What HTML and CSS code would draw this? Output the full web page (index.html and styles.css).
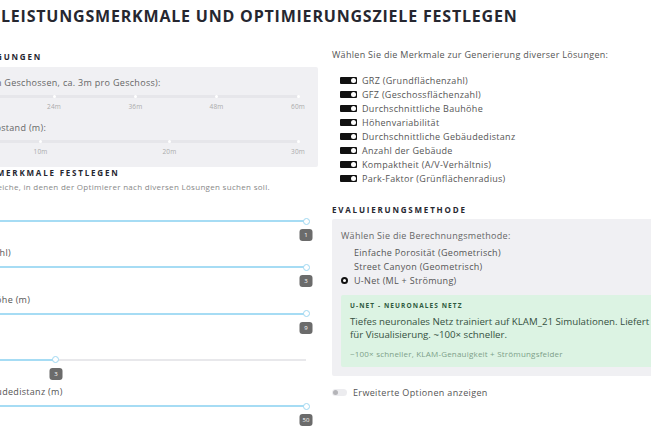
FILE: index.html
```html
<!DOCTYPE html>
<html lang="de">
<head>
	<meta charset="UTF-8">
	<title>Leistungsmerkmale festlegen</title>
	<link rel="stylesheet" href="styles.css">
</head>
<body>
	<h1 class="title">Leistungsmerkmale und Optimierungsziele festlegen</h1>

	<div class="cols">
		<div class="col">
			<h3 class="sec sec-first">Bebauungs-Bedingungen</h3>
			<div class="box">
				<div class="lbl">Maximale Bauhöhe (in Geschossen, ca. 3m pro Geschoss):</div>
				<div class="rs">
					<div class="rs-track"></div>
					<span class="dot" style="left:15.8%"></span>
					<span class="dot" style="left:36.8%"></span>
					<span class="dot" style="left:57.9%"></span>
					<span class="dot" style="left:78.9%"></span>
					<span class="dot" style="left:100%"></span>
					<span class="tick" style="left:15.8%">12m</span>
					<span class="tick" style="left:36.8%">24m</span>
					<span class="tick" style="left:57.9%">36m</span>
					<span class="tick" style="left:78.9%">48m</span>
					<span class="tick" style="left:100%">60m</span>
				</div>
				<div class="lbl">Minimaler Gebäudeabstand (m):</div>
				<div class="rs">
					<div class="rs-track"></div>
					<span class="dot" style="left:0%"></span>
					<span class="dot" style="left:33.3%"></span>
					<span class="dot" style="left:66.7%"></span>
					<span class="dot" style="left:100%"></span>
					<span class="tick" style="left:0%">0m</span>
					<span class="tick" style="left:33.3%">10m</span>
					<span class="tick" style="left:66.7%">20m</span>
					<span class="tick" style="left:100%">30m</span>
				</div>
			</div>

			<h3 class="sec">Zielbereiche der Merkmale festlegen</h3>
			<p class="sub">Definieren Sie hier die Bereiche, in denen der Optimierer nach diversen Lösungen suchen soll.</p>

			<div class="feats">
				<div class="feat">
					<div class="feat-lbl">GRZ (Grundflächenzahl)</div>
					<div class="sl">
						<div class="sl-track"></div>
						<div class="sl-fill" style="width:100%"></div>
						<span class="knob" style="left:100%"></span>
						<span class="badge" style="left:100%">1</span>
					</div>
				</div>
				<div class="feat">
					<div class="feat-lbl">GFZ (Geschossflächenzahl)</div>
					<div class="sl">
						<div class="sl-track"></div>
						<div class="sl-fill" style="width:100%"></div>
						<span class="knob" style="left:100%"></span>
						<span class="badge" style="left:100%">3</span>
					</div>
				</div>
				<div class="feat">
					<div class="feat-lbl">Durchschnittliche Bauhöhe (m)</div>
					<div class="sl">
						<div class="sl-track"></div>
						<div class="sl-fill" style="width:100%"></div>
						<span class="knob" style="left:100%"></span>
						<span class="badge" style="left:100%">9</span>
					</div>
				</div>
				<div class="feat">
					<div class="feat-lbl">Höhenvariabilität</div>
					<div class="sl">
						<div class="sl-track"></div>
						<div class="sl-fill" style="width:39.6%"></div>
						<span class="knob" style="left:39.6%"></span>
						<span class="badge" style="left:39.6%">3</span>
					</div>
				</div>
				<div class="feat">
					<div class="feat-lbl">Durchschnittliche Gebäudedistanz (m)</div>
					<div class="sl">
						<div class="sl-track"></div>
						<div class="sl-fill" style="width:100%"></div>
						<span class="knob" style="left:100%"></span>
						<span class="badge" style="left:100%">50</span>
					</div>
				</div>
			</div>
		</div>

		<div class="col">
			<p class="intro">Wählen Sie die Merkmale zur Generierung diverser Lösungen:</p>
			<ul class="toggles">
				<li><span class="sw"></span>GRZ (Grundflächenzahl)</li>
				<li><span class="sw"></span>GFZ (Geschossflächenzahl)</li>
				<li><span class="sw"></span>Durchschnittliche Bauhöhe</li>
				<li><span class="sw"></span>Höhenvariabilität</li>
				<li><span class="sw"></span>Durchschnittliche Gebäudedistanz</li>
				<li><span class="sw"></span>Anzahl der Gebäude</li>
				<li><span class="sw"></span>Kompaktheit (A/V-Verhältnis)</li>
				<li><span class="sw"></span>Park-Faktor (Grünflächenradius)</li>
			</ul>

			<h3 class="sec sec-eval">Evaluierungsmethode</h3>
			<div class="box box-eval">
				<div class="lbl">Wählen Sie die Berechnungsmethode:</div>
				<div class="opts">
					<div class="opt"><span class="radio"></span>Einfache Porosität (Geometrisch)</div>
					<div class="opt"><span class="radio"></span>Street Canyon (Geometrisch)</div>
					<div class="opt"><span class="radio on"></span>U-Net (ML + Strömung)</div>
				</div>
				<div class="info">
					<div class="info-h">U-Net - Neuronales Netz</div>
					<p class="info-t">Tiefes neuronales Netz trainiert auf KLAM_21 Simulationen. Liefert Strömungsfelder<br>für Visualisierung. ~100× schneller.</p>
					<p class="info-s">~100× schneller, KLAM-Genauigkeit + Strömungsfelder</p>
				</div>
			</div>

			<div class="adv"><span class="sw-off"></span>Erweiterte Optionen anzeigen</div>
		</div>
	</div>
</body>
</html>
```

FILE: styles.css
```css
body{
	margin: 0;
	font-family: "Open Sans", "Noto Sans", sans-serif;
	color: #555;
	background: #fff;
	overflow: hidden;
}
.title{
	margin: 0;
	padding: 6px 0 0 1px;
	font-size: 16px;
	line-height: 20px;
	font-weight: 700;
	letter-spacing: 0.8px;
	text-transform: uppercase;
	color: #262730;
	white-space: nowrap;
}
.cols{
	display: flex;
	gap: 14px;
	margin: 22px 0 0 -108px;
}
.col{
	flex: none;
	width: 426px;
}
.sec{
	margin: 0;
	font-size: 8px;
	line-height: 12px;
	font-weight: 700;
	letter-spacing: 1.8px;
	text-transform: uppercase;
	color: #262730;
	white-space: nowrap;
}
.sec-first{
	margin: 3px 0 4px;
}
.box{
	background: #f0f0f3;
	padding: 9px 10px 9px;
	border-radius: 2px;
}
.lbl{
	font-size: 9px;
	line-height: 14px;
	letter-spacing: 0.3px;
	color: #666;
	white-space: nowrap;
}

/* sliders in the grey box */
.rs{
	position: relative;
	height: 23px;
	margin: 0 10px 8px;
}
.rs:last-child{
	margin-bottom: 0;
}
.rs-track{
	position: absolute;
	top: 5px;
	left: 0;
	right: 0;
	height: 3px;
	border-radius: 2px;
	background: #e6e6ea;
}
.dot{
	position: absolute;
	top: 5px;
	width: 3px;
	height: 3px;
	margin-left: -1.5px;
	border-radius: 50%;
	background: #fff;
}
.tick{
	position: absolute;
	top: 12px;
	font-size: 6.5px;
	line-height: 10px;
	letter-spacing: 0.2px;
	color: #aaa;
	transform: translateX(-50%);
}

.sub{
	margin: 2px 0 0;
	font-size: 8px;
	line-height: 12px;
	letter-spacing: 0.3px;
	color: #888;
	white-space: nowrap;
}
.feats{
	margin-top: 7px;
}
.feat{
	height: 46.3px;
	margin-right: 12px;
}
.feat-lbl{
	font-size: 9px;
	line-height: 14px;
	letter-spacing: 0.3px;
	color: #555;
	white-space: nowrap;
}
.sl{
	position: relative;
	height: 32px;
}
.sl-track,.sl-fill{
	position: absolute;
	top: 6px;
	left: 0;
	height: 2px;
}
.sl-track{
	right: 0;
	background: #e8e8eb;
}
.sl-fill{
	background: #a6dcf4;
}
.knob{
	position: absolute;
	top: 3.5px;
	width: 7px;
	height: 7px;
	margin-left: -3.5px;
	box-sizing: border-box;
	border: 1.5px solid #9fd7f1;
	border-radius: 50%;
	background: #fff;
}
.badge{
	position: absolute;
	top: 15px;
	min-width: 13px;
	height: 12px;
	padding: 0 2px;
	box-sizing: border-box;
	transform: translateX(-50%);
	border-radius: 3px;
	background: #6b6b6b;
	color: #fff;
	font-size: 6px;
	line-height: 12px;
	text-align: center;
}

/* right column */
.intro{
	margin: 0;
	font-size: 9px;
	line-height: 14px;
	letter-spacing: 0.3px;
	color: #555;
}
.toggles{
	list-style: none;
	margin: 12px 0 0;
	padding: 0 0 0 8px;
}
.toggles li{
	display: flex;
	align-items: center;
	height: 13.9px;
	font-size: 9px;
	letter-spacing: 0.3px;
	color: #555;
}
.sw{
	position: relative;
	width: 17px;
	height: 7px;
	margin-right: 5px;
	border-radius: 1px;
	background: #111;
}
.sw::after{
	content: "";
	position: absolute;
	top: 1px;
	right: 1px;
	width: 5px;
	height: 5px;
	border-radius: 50%;
	background: #fff;
}
.sec-eval{
	margin: 19px 0 3px;
}
.box-eval{
	padding: 10px 9px 9px;
}
.opts{
	margin-top: 3px;
}
.opt{
	display: flex;
	align-items: center;
	height: 13.7px;
	font-size: 9px;
	letter-spacing: 0.3px;
	color: #555;
}
.radio{
	width: 7px;
	height: 7px;
	margin-right: 6px;
	box-sizing: border-box;
	border: 2px solid transparent;
	border-radius: 50%;
}
.radio.on{
	border-color: #111;
	background: #fff;
}
.info{
	margin-top: 8px;
	padding: 6px 9px 8px;
	border-radius: 2px;
	background: #dcf3e3;
}
.info-h{
	font-size: 6.5px;
	line-height: 10px;
	font-weight: 700;
	letter-spacing: 1.1px;
	text-transform: uppercase;
	color: #2f5a40;
}
.info-t{
	margin: 4px 0 0;
	font-size: 9.7px;
	line-height: 13px;
	color: #35503f;
	white-space: nowrap;
}
.info-s{
	margin: 8px 0 0;
	font-size: 8px;
	line-height: 10px;
	letter-spacing: 0.2px;
	color: #7d9f89;
}
.adv{
	display: flex;
	align-items: center;
	height: 14px;
	margin-top: 9px;
	font-size: 9px;
	letter-spacing: 0.35px;
	color: #555;
}
.sw-off{
	position: relative;
	width: 15px;
	height: 7px;
	margin-right: 6px;
	border-radius: 4px;
	background: #ececef;
}
.sw-off::after{
	content: "";
	position: absolute;
	top: 1px;
	left: 1px;
	width: 5px;
	height: 5px;
	border-radius: 50%;
	background: #b4b4b8;
}
```
